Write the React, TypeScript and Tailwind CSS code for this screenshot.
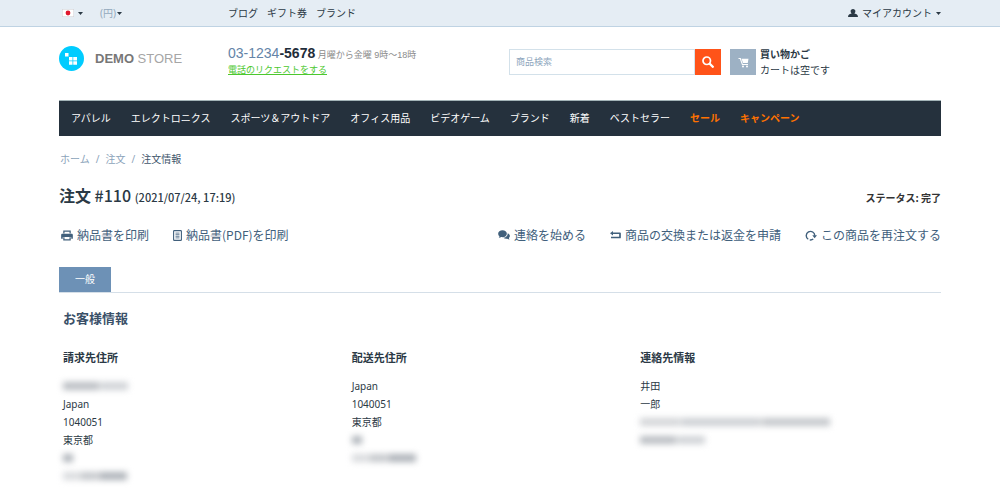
import type { ReactNode } from 'react';

const navItems = [
  { label: 'アパレル' },
  { label: 'エレクトロニクス' },
  { label: 'スポーツ＆アウトドア' },
  { label: 'オフィス用品' },
  { label: 'ビデオゲーム' },
  { label: 'ブランド' },
  { label: '新着' },
  { label: 'ベストセラー' },
  { label: 'セール', hot: true },
  { label: 'キャンペーン', hot: true },
];

function Caret() {
  return (
    <svg viewBox="0 0 5 3" className="h-[3px] w-[5px]" fill="currentColor" aria-hidden="true">
      <path d="M0 0h5L2.5 3z" />
    </svg>
  );
}

function Flag() {
  return (
    <svg viewBox="0 0 12 8" className="h-2 w-3" aria-hidden="true">
      <rect x=".25" y=".25" width="11.5" height="7.5" fill="#fff" stroke="#d0cfd2" strokeWidth=".5" />
      <circle cx="6" cy="4" r="2.4" fill="#e0182d" />
    </svg>
  );
}

function UserIcon() {
  return (
    <svg viewBox="0 0 20 16" className="h-2 w-[10px]" fill="currentColor" aria-hidden="true">
      <path d="M10 0c2.900 0 4.800 1.900 4.800 4.500 0 1.700-.8 3.200-1.900 4.200-.1.500.3.800 1.200 1 3.400.8 5.600 2.200 5.900 6.300H0c.3-4.100 2.500-5.500 5.900-6.300.9-.2 1.300-.5 1.200-1-1.100-1-1.900-2.500-1.900-4.200C5.200 1.900 7.100 0 10 0z" />
    </svg>
  );
}

function SearchIcon() {
  return (
    <svg viewBox="0 0 24 24" className="h-3 w-3" fill="none" stroke="currentColor" aria-hidden="true">
      <circle cx="9.500" cy="9.500" r="7.500" strokeWidth="3.400" />
      <path d="M15.500 15.500l6 6" strokeWidth="4.800" strokeLinecap="round" />
    </svg>
  );
}

function CartIcon() {
  return (
    <svg viewBox="0 0 22 22" className="h-[11px] w-[11px]" fill="currentColor" aria-hidden="true">
      <path d="M1 2h4.500l4 12H20v2.200H8L3.700 4H1z" />
      <path d="M7 3.500h14L19.500 12H10z" />
      <circle cx="10" cy="19" r="2" />
      <circle cx="18" cy="19" r="2" />
    </svg>
  );
}

function PrintIcon() {
  return (
    <svg viewBox="0 0 24 22" className="h-[11px] w-3" fill="currentColor" aria-hidden="true">
      <path d="M4.500 1h15v6H17V3.400H7V7H4.500z" />
      <path d="M3 7.500h18c1.700 0 2.700 1 2.700 2.500v7.500h-3.200V14h-17v3.500H.3V10c0-1.500 1-2.500 2.700-2.500z" />
      <path d="M4.500 14.500H7v4h10v-4h2.500V21h-15z" />
    </svg>
  );
}

function DocIcon() {
  return (
    <svg viewBox="0 0 18 22" className="h-[11px] w-[9px]" fill="none" stroke="currentColor" aria-hidden="true">
      <rect x="1.200" y="1.200" width="15.600" height="19.600" rx="1.500" strokeWidth="2.200" />
      <path d="M5 6.200h8M5 9.400h8M5 12.600h8M5 15.800h8" strokeWidth="1.600" />
    </svg>
  );
}

function ChatIcon() {
  return (
    <svg viewBox="0 0 24 20" className="h-[10px] w-3" fill="currentColor" aria-hidden="true">
      <path d="M9 .5c4.900 0 8.700 3 8.700 6.900S13.900 14.300 9 14.300c-.8 0-1.600-.1-2.400-.3-1.300 1-3 1.700-5 1.700.8-1 1.200-2.100 1.200-3.300C1.200 11.200.3 9.500.3 7.400.3 3.500 4.100.5 9 .5z" />
      <path d="M19.400 6.600c2.600.9 4.400 2.800 4.400 5.200 0 1.600-.8 3-2 4 0 1.200.5 2.200 1.300 3.200-1.900 0-3.500-.7-4.700-1.700-3 .5-5.900-.2-7.700-1.700 5-.6 8.700-4 8.700-8.200z" />
    </svg>
  );
}

function ReturnIcon() {
  return (
    <svg viewBox="0 0 22 16" className="h-2 w-[11px]" aria-hidden="true">
      <path d="M4 4.500h16v8.500H2" fill="none" stroke="currentColor" strokeWidth="3.400" strokeLinejoin="round" />
      <path d="M0 4.500L6 0v9z" fill="currentColor" />
    </svg>
  );
}

function ReorderIcon() {
  return (
    <svg viewBox="0 0 24 22" className="h-[11px] w-3" aria-hidden="true">
      <path d="M6.500 18.500A8.500 8.500 0 1 1 19.500 11.500M9.500 19.700a8.500 8.500 0 0 0 7-1.700" fill="none" stroke="currentColor" strokeWidth="2.800" />
      <path d="M14.500 10.500H24l-4.700 6z" fill="currentColor" />
    </svg>
  );
}

function Logo() {
  return (
    <a href="#" className="flex items-center gap-[11px]">
      <svg viewBox="0 0 50 50" className="h-[25px] w-[25px]" aria-hidden="true">
        <circle cx="25" cy="25" r="25" fill="#0cf" />
        <g fill="#fff">
          <rect x="12" y="14" width="7" height="7" />
          <rect x="20" y="22" width="7" height="7" />
          <rect x="28.500" y="22" width="7.500" height="7" />
          <rect x="20" y="30.500" width="7" height="7" />
          <rect x="28.500" y="30.500" width="7.500" height="7" />
        </g>
      </svg>
      <span className="font-['Liberation_Sans',sans-serif] text-[13px] text-[#a6a6a6]">
        <b className="text-[#777]">DEMO</b> STORE
      </span>
    </a>
  );
}

function Action({ icon, children }: { icon: ReactNode; children: ReactNode }) {
  return (
    <a href="#" className="flex items-center gap-1">
      {icon}
      {children}
    </a>
  );
}

function Hidden({ parts }: { parts: string[] }) {
  return (
    <li className="flex h-[18px] items-center gap-px blur-[3px]" aria-hidden="true">
      {parts.map((part, i) => (
        <span key={i} className={part} />
      ))}
    </li>
  );
}

const hiddenName = ['h-2 w-9 bg-[#b9bdc2]', 'h-2 w-7 bg-[#cfd2d6]'];
const hiddenWard = ['h-2 w-[10px] bg-[#adb2b8]'];
const hiddenStreet = ['h-2 w-4 bg-[#d9dbde]', 'h-2 w-[18px] bg-[#c4c7cb]', 'h-2 w-7 bg-[#adb2b8]'];
const hiddenMail = ['h-2 w-10 bg-[#d3d5d8]', 'h-2 w-20 bg-[#cccfd3]', 'h-2 w-[68px] bg-[#c4c7cb]'];

function InfoColumn({ title, children }: { title: string; children: ReactNode }) {
  return (
    <section>
      <h3 className="text-[11px] leading-4 font-bold">{title}</h3>
      <ul className="mt-[11px] text-[10px] leading-[18px]">{children}</ul>
    </section>
  );
}

export default function App() {
  return (
    <div className="min-h-screen bg-white font-['Noto_Sans','Noto_Sans_CJK_JP',sans-serif] text-[10px] text-[#2b3945]">
      <div className="border-b border-[#bfd3e3] bg-[#e5edf4] px-[59px]">
        <div className="grid h-[26px] grid-cols-[169fr_713fr] items-center">
          <div className="flex items-center gap-[17px] pl-[3px]">
            <button className="flex items-center gap-1" aria-label="日本語">
              <Flag />
              <Caret />
            </button>
            <button className="flex items-center gap-px">
              <span className="text-[#93a9bd]">(円)</span>
              <Caret />
            </button>
          </div>
          <div className="flex items-center justify-between">
            <nav className="flex gap-[9px]">
              <a href="#">ブログ</a>
              <a href="#">ギフト券</a>
              <a href="#">ブランド</a>
            </nav>
            <button className="flex items-center gap-1">
              <UserIcon />
              マイアカウント
              <Caret />
            </button>
          </div>
        </div>
      </div>

      <div className="px-[59px]">
        <header className="grid h-[73px] grid-cols-[169fr_281fr_221fr_211fr] items-start pt-[19px]">
          <Logo />
          <div className="font-['Liberation_Sans','Noto_Sans_CJK_JP',sans-serif] whitespace-nowrap">
            <p className="text-[9px] leading-[14px] text-[#8b8b8b]">
              <span className="text-[14px] text-[#6484a8]">
                03-1234<b className="text-[#1f2d3a]">-5678</b>
              </span>{' '}
              月曜から金曜 9時～18時
            </p>
            <a href="#" className="block text-[9px] leading-[17px] text-[#4cc82e] underline">
              電話のリクエストをする
            </a>
          </div>
          <form className="mt-[3px] mr-[9px] flex h-[26px]" role="search">
            <input
              type="text"
              aria-label="商品検索"
              placeholder="商品検索"
              className="min-w-0 flex-1 border border-[#d3e1ea] px-[6px] text-[9px] outline-none placeholder:text-[#8ea6bd]"
            />
            <button
              type="button"
              aria-label="検索"
              className="flex w-[26px] items-center justify-center bg-[#ff5319] text-white"
            >
              <SearchIcon />
            </button>
          </form>
          <a href="#" className="flex gap-1">
            <span className="mt-[3px] flex h-[26px] w-[26px] items-center justify-center bg-[#9db1c4] text-white">
              <CartIcon />
            </span>
            <span className="leading-4">
              <b className="block">買い物かご</b>
              カートは空です
            </span>
          </a>
        </header>

        <nav className="border-t border-[#a3b4b8] bg-[#25313d] px-3">
          <ul className="flex h-[35px] items-center gap-5 whitespace-nowrap text-white">
            {navItems.map((item) => (
              <li key={item.label}>
                <a href="#" className={item.hot ? 'font-bold text-[#ff7200]' : ''}>
                  {item.label}
                </a>
              </li>
            ))}
          </ul>
        </nav>

        <nav className="mt-[15px] flex gap-[6px] leading-4 text-[#8ba3ba]">
          <a href="#" className="pl-px">ホーム</a>
          <span>/</span>
          <a href="#">注文</a>
          <span>/</span>
          <span className="text-[#3f566c]">注文情報</span>
        </nav>

        <div className="mt-4 flex items-center justify-between font-['Noto_Sans_CJK_JP',sans-serif]">
          <h1 className="text-base leading-6 font-medium">
            <b>注文</b> #110 <span className="text-[11px]">(2021/07/24, 17:19)</span>
          </h1>
          <p className="pt-[2px] font-bold text-[#333]">ステータス: 完了</p>
        </div>

        <div className="mt-[18px] flex items-center justify-between font-['Noto_Sans_CJK_JP',sans-serif] text-xs leading-4 text-[#41607c]">
          <div className="flex gap-6 pl-[2px]">
            <Action icon={<PrintIcon />}>納品書を印刷</Action>
            <Action icon={<DocIcon />}>納品書(PDF)を印刷</Action>
          </div>
          <div className="flex gap-6">
            <Action icon={<ChatIcon />}>連絡を始める</Action>
            <Action icon={<ReturnIcon />}>商品の交換または返金を申請</Action>
            <Action icon={<ReorderIcon />}>この商品を再注文する</Action>
          </div>
        </div>

        <div role="tablist" className="mt-6 flex border-b border-[#d5dfe8]">
          <button role="tab" aria-selected="true" className="h-[25px] bg-[#6d91b6] px-4 text-white">
            一般
          </button>
        </div>

        <main className="pr-3 pl-1">
          <h2 className="mt-[15px] text-[13px] leading-5 font-bold text-[#3a5068]">お客様情報</h2>
          <div className="mt-[22px] grid grid-cols-3">
            <InfoColumn title="請求先住所">
              <Hidden parts={hiddenName} />
              <li>Japan</li>
              <li>1040051</li>
              <li>東京都</li>
              <Hidden parts={hiddenWard} />
              <Hidden parts={hiddenStreet} />
            </InfoColumn>
            <InfoColumn title="配送先住所">
              <li>Japan</li>
              <li>1040051</li>
              <li>東京都</li>
              <Hidden parts={hiddenWard} />
              <Hidden parts={hiddenStreet} />
            </InfoColumn>
            <InfoColumn title="連絡先情報">
              <li>井田</li>
              <li>一郎</li>
              <Hidden parts={hiddenMail} />
              <Hidden parts={hiddenName} />
            </InfoColumn>
          </div>
        </main>
      </div>
    </div>
  );
}
